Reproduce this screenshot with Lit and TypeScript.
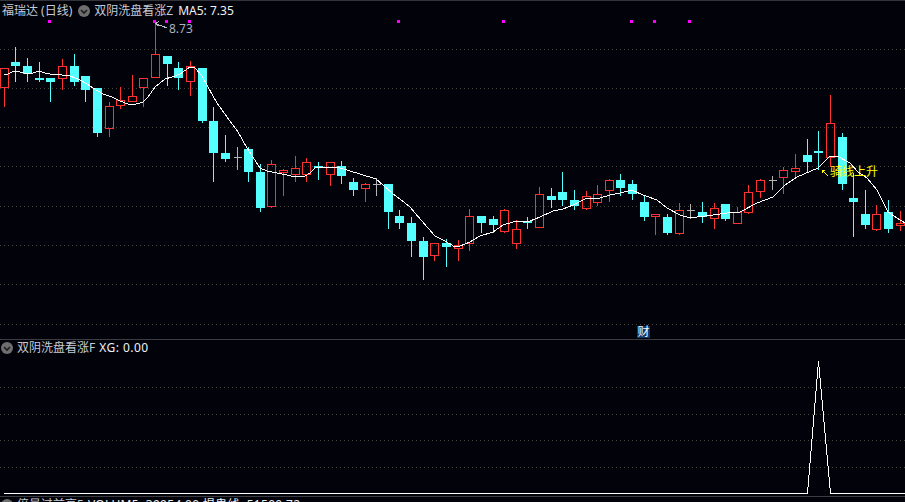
import { LitElement, html, css, svg } from "lit";
import { customElement } from "lit/decorators.js";

// measured centre pixel of each candle
const XS = [4,15,27,39,50,62,74,85,97,109,120,132,143,155,167,178,190,202,213,225,237,248,260,271,283,295,306,318,330,341,353,365,376,388,399,411,423,434,446,458,469,481,493,504,516,527,539,551,562,574,586,597,609,620,632,644,655,667,679,690,702,714,725,737,748,760,772,783,795,807,818,830,842,853,865,876,888,900];

// kind: r = red hollow, c = cyan filled, g = gray doji; values: high, top, bottom, low
const CANDLES: [string, number, number, number, number][] = [
  ["r",68,68,88,107],["c",47,62,66,82],["c",58,66,74,82],["c",62,78,80,82],["c",78,78,82,102],
  ["r",59,66,79,90],["c",54,66,82,86],["c",76,76,90,102],["c",88,88,133,137],["r",102,106,129,137],
  ["r",87,100,106,109],["r",75,96,102,102],["r",78,78,88,107],["r",23,54,78,78],["c",56,56,64,86],
  ["c",62,68,78,90],["r",61,66,82,96],["c",68,68,121,123],["c",107,121,153,182],["c",135,153,159,162],
  ["g",147,157,157,170],["c",147,149,172,182],["c",164,172,208,212],["r",160,164,207,208],["r",169,170,173,196],
  ["r",156,168,175,182],["r",158,162,175,182],["c",162,166,168,180],["r",162,162,175,186],["c",161,166,176,184],
  ["c",178,182,190,196],["r",183,184,189,202],["g",178,184,184,196],["c",184,184,212,229],["c",210,216,223,229],
  ["c",217,223,241,257],["c",237,241,257,280],["r",243,243,256,261],["c",239,243,247,267],["r",240,245,249,261],
  ["r",209,216,244,251],["c",216,216,223,233],["c",216,219,225,233],["r",209,210,232,233],["r",220,229,244,249],
  ["c",217,221,223,229],["r",187,194,228,228],["c",188,196,200,208],["c",172,192,200,206],["c",190,200,206,210],
  ["r",191,196,209,210],["r",185,194,203,206],["r",179,180,191,202],["c",174,180,188,196],["c",180,184,194,200],
  ["c",196,202,217,221],["r",214,214,217,235],["c",214,217,233,235],["r",203,210,234,235],["g",204,210,210,219],
  ["c",202,212,217,223],["r",203,208,219,229],["c",204,204,219,221],["r",207,212,224,224],["r",185,192,213,214],
  ["r",179,180,192,198],["g",176,180,180,190],["r",167,170,178,194],["r",154,168,172,178],["c",139,155,162,173],
  ["c",131,151,153,170],["r",95,123,158,167],["c",133,137,184,190],["c",173,198,202,237],["c",190,214,225,229],
  ["r",205,214,230,231],["c",200,212,229,233],["r",211,223,226,231],
];

const MA = [
  [4,75],[8,74],[12,72],[16,71],[20,72],[24,73],[28,74],[33,73],[39,71],[45,73],[50,74],[62,75],[70,76],
  [80,80],[87,84],[93,88],[103,94],[112,97],[120,101],[128,104],[133,105],[143,102],[148,97],[155,87],
  [165,79],[172,77],[180,74],[190,67],[195,68],[202,76],[208,87],[217,103],[227,117],[238,132],[247,148],
  [260,168],[267,171],[277,173],[287,175],[295,177],[300,176],[305,176],[310,173],[315,168],[320,167],
  [330,167],[340,168],[350,171],[360,174],[376,179],[383,185],[393,194],[400,199],[410,207],[415,213],
  [428,228],[435,236],[445,241],[455,247],[460,246],[470,242],[480,236],[493,232],[503,225],[513,222],
  [530,221],[540,217],[553,211],[563,209],[573,205],[585,199],[600,198],[610,195],[620,193],[632,190],
  [643,195],[657,200],[667,208],[680,215],[690,218],[697,217],[713,215],[727,213],[740,212],[757,203],
  [773,197],[785,185],[797,177],[818,168],[830,156],[837,156],[850,163],[858,172],[867,178],[877,190],
  [888,212],[897,218],[905,223],
];

const MARKS = [49, 154, 166, 189, 398, 503, 631, 654, 689];
const GRID_TOP = [49, 88, 127, 166, 206, 245, 284, 324];
const GRID_BOTTOM = [47, 74, 100, 127];

const chevron = html`<svg class="chev" viewBox="0 0 12 12" aria-hidden="true">
  <circle cx="6" cy="6" r="6" fill="#6e6e6e"></circle>
  <path d="M3 5 L6 8 L9 5" fill="none" stroke="#1c1c1c" stroke-width="1.6"></path>
</svg>`;

@customElement("app-root")
export class AppRoot extends LitElement {
  static styles = css`
    :host {
      display: flex;
      flex-direction: column;
      width: 905px;
      height: 502px;
      overflow: hidden;
      background: #02020a;
      font-family: "Noto Sans", "Noto Sans CJK SC", sans-serif;
      font-size: 12px;
      color: #c2ccd6;
    }
    .panel { position: relative; flex: none; overflow: hidden; }
    .main { height: 339px; border-top: 1px solid #33333a; box-sizing: border-box; }
    .sub { height: 157px; border-top: 1px solid #3c3c42; box-sizing: border-box; }
    .vol { flex: 1; border-top: 1px solid #3c3c42; }
    .plot { display: block; width: 905px; }
    .legend {
      position: absolute;
      display: flex;
      align-items: center;
      height: 16px;
      line-height: 16px;
      white-space: nowrap;
    }
    .main .legend { top: 2px; left: 2px; }
    .sub .legend, .vol .legend { top: 0; left: 1px; }
    .chev { width: 12px; height: 12px; flex: none; margin-right: 4px; }
    .main .chev { margin-left: 6px; }
    .value { color: #eef2f6; margin-left: 5px; }
    .wide { letter-spacing: 0.45px; margin-left: 4px; }
    .wider { letter-spacing: 0.3px; margin-left: 4px; }
    .badge {
      position: absolute;
      left: 637px;
      top: 325px;
      width: 13px;
      height: 12px;
      line-height: 12px;
      text-align: center;
      background: #0c3a6c;
      color: #f4f8ff;
      font-size: 12px;
    }
    .price { fill: #a6b2be; font-size: 12px; font-family: "Noto Sans", sans-serif; }
    .signal { fill: #ffff00; font-size: 12px; font-family: "Noto Sans CJK SC", sans-serif; }
  `;

  private candle(d: [string, number, number, number, number], i: number) {
    const [kind, hi, top, bot, lo] = d;
    const cx = XS[i] + 0.5;
    const y = (v: number) => v - 1; // the main panel starts under a 1px border
    if (kind === "g") {
      return svg`<path d="M${cx} ${y(hi)}V${y(lo)}M${cx - 4} ${y(top) + 0.5}H${cx + 4}" stroke="#b4b4b4"></path>`;
    }
    if (kind === "c") {
      return svg`<path d="M${cx} ${y(hi)}V${y(lo)}" stroke="#54ffff"></path>
        <rect x=${cx - 4.5} y=${y(top)} width="9" height=${bot - top} fill="#54ffff"></rect>`;
    }
    return svg`<path d="M${cx} ${y(hi)}V${y(top)}M${cx} ${y(bot)}V${y(lo)}" stroke="#ff3232"></path>
      <rect x=${cx - 4} y=${y(top) + 0.5} width="8" height=${bot - top - 1} fill="none" stroke="#ff3232"></rect>`;
  }

  render() {
    const dots = (ys: number[]) =>
      ys.map((g) => svg`<path d="M0 ${g + 0.5}H905" stroke="#45453e" stroke-dasharray="1 3"></path>`);
    const ma = MA.map(([x, y]) => `${x},${y - 1}`).join(" ");
    return html`
      <section class="panel main">
        <svg class="plot" height="338" viewBox="0 0 905 338" shape-rendering="crispEdges">
          ${dots(GRID_TOP.map((g) => g - 1))}
          ${MARKS.map((x) => svg`<rect x=${x - 1} y="19" width="3" height="3" fill="#ff00ff"></rect>`)}
          ${CANDLES.map((c, i) => this.candle(c, i))}
          <polyline points=${ma} fill="none" stroke="#ffffff"></polyline>
          <path d="M155.5 22.5L167 27M155.5 22.5L159 20.5M155.5 22.5L159 25" fill="none" stroke="#b8c0c8"></path>
          <text class="price" x="169" y="32">8.73</text>
          <path d="M822 169L828 175M822 169V172M822 169H825" fill="none" stroke="#ffff00"></path>
          <text class="signal" x="830" y="175">骑线上升</text>
        </svg>
        <div class="legend">
          <span>福瑞达 (日线)</span>
          ${chevron}
          <span>双阴洗盘看涨Z</span>
          <span class="value">MA5: 7.35</span>
        </div>
        <div class="badge">财</div>
      </section>
      <section class="panel sub">
        <svg class="plot" height="156" viewBox="0 0 905 156" shape-rendering="crispEdges">
          ${dots(GRID_BOTTOM)}
          <polyline points="4,153 807.5,153 818.5,21 830.5,153 905,153" fill="none" stroke="#ffffff"></polyline>
        </svg>
        <div class="legend">
          ${chevron}
          <span>双阴洗盘看涨F</span>
          <span class="value wide">XG: 0.00</span>
        </div>
      </section>
      <section class="panel vol">
        <div class="legend">
          ${chevron}
          <span>倍量过前高5</span>
          <span class="value wider">VOLUM5: 39954.00 揭鬼线: 51500.72</span>
        </div>
      </section>
    `;
  }
}
